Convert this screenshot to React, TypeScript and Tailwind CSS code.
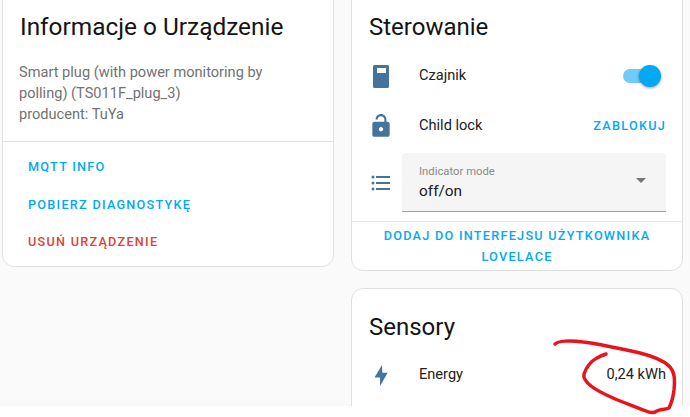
const font = "font-['Roboto',sans-serif]";

function ActionLink({ children, red }: { children: string; red?: boolean }) {
  return (
    <div className={`h-[37.5px] flex items-center text-[12.7px] font-medium tracking-[1.25px] ${red ? "text-[#db4437]" : "text-[#03a9f4]"}`}>
      {children}
    </div>
  );
}

function InfoCard() {
  return (
    <div className="w-[332px] h-[291px] -mt-[24px] bg-white border border-[#e0e0e0] rounded-xl">
      <div className="px-[17px] pt-[34px] text-[24.4px] leading-[32px] text-[#141414]">Informacje o Urządzenie</div>
      <div className="px-[16px] pt-[19px] h-[98px] text-[14.6px] leading-[21px] text-[#727272]">
        Smart plug (with power monitoring by
        <br />
        polling) (TS011F_plug_3)
        <br />
        producent: TuYa
      </div>
      <div className="border-t border-[#e0e0e0] pl-[25px] pt-[6px]">
        <ActionLink>MQTT INFO</ActionLink>
        <ActionLink>POBIERZ DIAGNOSTYKĘ</ActionLink>
        <ActionLink red>USUŃ URZĄDZENIE</ActionLink>
      </div>
    </div>
  );
}

function DeviceIcon() {
  return (
    <svg width="24" height="24" viewBox="0 0 24 24" fill="#44739e">
      <path fillRule="evenodd" d="M5.500 1h13A1.500 1.500 0 0 1 20 2.500v20a1.500 1.500 0 0 1-1.500 1.500h-13A1.500 1.500 0 0 1 4 22.500v-20A1.500 1.500 0 0 1 5.500 1zM8 4v5h9V4z" />
    </svg>
  );
}

function LockIcon() {
  return (
    <svg width="26" height="26" viewBox="0 0 24 24" fill="#44739e" className="-ml-[1px]">
      <path d="M18 8h-1V6c0-2.760-2.240-5-5-5S7 3.240 7 6h1.900c0-1.710 1.390-3.100 3.100-3.100 1.710 0 3.100 1.390 3.100 3.100v2H6c-1.100 0-2 .900-2 2v10c0 1.100.900 2 2 2h12c1.100 0 2-.900 2-2V10c0-1.100-.900-2-2-2zm-6 9c-1.100 0-2-.900-2-2s.900-2 2-2 2 .900 2 2-.900 2-2 2z" />
    </svg>
  );
}

function ListIcon() {
  return (
    <svg width="24" height="24" viewBox="0 0 24 24" fill="#44739e">
      <path d="M7 5h14v2H7V5m0 8v-2h14v2H7M4 4.500A1.500 1.500 0 0 1 5.500 6 1.500 1.500 0 0 1 4 7.500 1.500 1.500 0 0 1 2.500 6 1.500 1.500 0 0 1 4 4.500m0 6A1.500 1.500 0 0 1 5.500 12 1.500 1.500 0 0 1 4 13.500 1.500 1.500 0 0 1 2.500 12 1.500 1.500 0 0 1 4 10.500M7 19v-2h14v2H7m-3-2.500A1.500 1.500 0 0 1 5.500 18 1.500 1.500 0 0 1 4 19.500 1.500 1.500 0 0 1 2.500 18 1.500 1.500 0 0 1 4 16.500z" />
    </svg>
  );
}

function FlashIcon() {
  return (
    <svg width="24" height="24" viewBox="0 0 24 24" fill="#44739e">
      <path d="M13 2L5.500 14.500H11V23L18.700 9.700H13.300z" />
    </svg>
  );
}

function Row({ icon, label, right }: { icon: React.ReactNode; label: string; right: React.ReactNode }) {
  return (
    <div className="h-[50px] flex items-center pl-[17px] pr-[16px]">
      <div className="w-[50px] flex-none">{icon}</div>
      <div className="flex-1 text-[14.6px] text-[#212121]">{label}</div>
      {right}
    </div>
  );
}

function Toggle() {
  return (
    <div className="relative w-[36px] h-[14px] bg-[#6fcbf8] rounded-full mr-[7px]">
      <div className="absolute right-[-2px] top-[-4px] w-[22px] h-[22px] rounded-full bg-[#03a9f4] shadow-[0_1px_3px_rgba(0,0,0,0.4)]" />
    </div>
  );
}

function ControlsCard() {
  return (
    <div className="w-[332px] h-[295px] -mt-[24px] bg-white border border-[#e0e0e0] rounded-xl">
      <div className="px-[17px] pt-[34px] pb-[8px] text-[24px] leading-[32px] text-[#141414]">Sterowanie</div>
      <Row icon={<DeviceIcon />} label="Czajnik" right={<Toggle />} />
      <Row
        icon={<LockIcon />}
        label="Child lock"
        right={<div className="text-[12.7px] font-medium tracking-[1.25px] text-[#03a9f4]">ZABLOKUJ</div>}
      />
      <div className="flex items-center pl-[17px] pr-[16px] pt-[2px]">
        <div className="w-[33px] flex-none"><ListIcon /></div>
        <div className="flex-1 h-[59px] bg-[#f5f5f5] rounded-t border-b border-[#9e9e9e] pl-[17px] pr-[20px] flex items-center justify-between">
          <div>
            <div className="text-[11.3px] leading-[14px] text-[#8a8a8a] pt-[3px]">Indicator mode</div>
            <div className="text-[15.4px] leading-[24px] text-[#212121]">off/on</div>
          </div>
          <div className="w-0 h-0 border-x-[5px] border-x-transparent border-t-[5px] border-t-[#757575] mb-[3px]" />
        </div>
      </div>
      <div className="mt-[9px] border-t border-[#e8e8e8] pt-[3px] text-center text-[12.7px] leading-[21px] font-medium tracking-[1.25px] text-[#03a9f4]">
        DODAJ DO INTERFEJSU UŻYTKOWNIKA
        <br />
        LOVELACE
      </div>
    </div>
  );
}

function SensorsCard() {
  return (
    <div className="w-[332px] h-[140px] mt-[17px] bg-white border border-[#e0e0e0] rounded-xl">
      <div className="px-[17px] pt-[22px] pb-[7px] text-[24px] leading-[32px] text-[#141414]">Sensory</div>
      <Row icon={<FlashIcon />} label="Energy" right={<div className="text-[14.6px] text-[#212121]">0,24 kWh</div>} />
    </div>
  );
}

export default function App() {
  return (
    <div className={`relative w-[690px] h-[417px] overflow-hidden bg-[#fafafa] ${font}`}>
      <div className="flex items-start gap-[17px] pl-[2px] h-[406px] overflow-hidden">
        <InfoCard />
        <div>
          <ControlsCard />
          <SensorsCard />
        </div>
      </div>
      <div className="h-[11px] bg-white" />
      {/* hand-drawn red circle round the reading */}
      <svg className="absolute left-0 top-0" width="690" height="417" viewBox="0 0 690 417" fill="none">
        <path
          d="M555 344C558 341 570 340 583 342C600 344 622 349 640 353C652 356 664 361 669 366C675 372 675 380 674 390C673 398 671 404 669 408C664 410 660 409 657 411C654 413 650 413 646 411C634 406 622 402 613 398C604 394 596 390 591 386C586 382 583 378 584 374C586 368 591 361 597 358C600 356 603 355 606 354"
          stroke="#e8141c"
          strokeWidth="3.500"
          strokeLinecap="round"
          strokeLinejoin="round"
        />
      </svg>
    </div>
  );
}
